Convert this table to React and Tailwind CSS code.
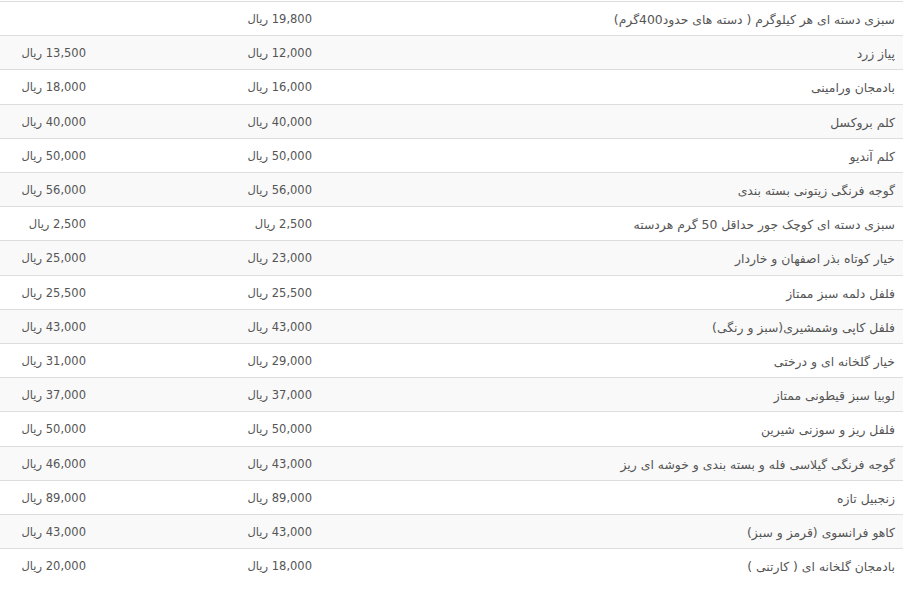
import React from "react";

const rows = [
  ["سبزی دسته ای هر کیلوگرم ( دسته های حدود400گرم)", "19,800", ""],
  ["پیاز زرد", "12,000", "13,500"],
  ["بادمجان ورامینی", "16,000", "18,000"],
  ["کلم بروکسل", "40,000", "40,000"],
  ["کلم آندیو", "50,000", "50,000"],
  ["گوجه فرنگی زیتونی بسته بندی", "56,000", "56,000"],
  ["سبزی دسته ای کوچک جور حداقل 50 گرم هردسته", "2,500", "2,500"],
  ["خیار کوتاه بذر اصفهان و خاردار", "23,000", "25,000"],
  ["فلفل دلمه سبز ممتاز", "25,500", "25,500"],
  ["فلفل کاپی وشمشیری(سبز و رنگی)", "43,000", "43,000"],
  ["خیار گلخانه ای و درختی", "29,000", "31,000"],
  ["لوبیا سبز قیطونی ممتاز", "37,000", "37,000"],
  ["فلفل ریز و سوزنی شیرین", "50,000", "50,000"],
  ["گوجه فرنگی گیلاسی فله و بسته بندی و خوشه ای ریز", "43,000", "46,000"],
  ["زنجبیل تازه", "89,000", "89,000"],
  ["کاهو فرانسوی (قرمز و سبز)", "43,000", "43,000"],
  ["بادمجان گلخانه ای ( کارتنی )", "18,000", "20,000"],
];

const price = (v) => (v ? `${v} ریال` : "");

export default function App() {
  return (
    <div className="w-[908px] h-[590px] bg-white overflow-hidden pt-[1px]">
      <table
        dir="rtl"
        className="w-[903px] border-collapse table-fixed text-[11.5px] text-[#555] font-['DejaVu_Sans',sans-serif]"
      >
        <colgroup>
          <col className="w-[583px]" />
          <col className="w-[226px]" />
          <col className="w-[94px]" />
        </colgroup>
        <tbody>
          {rows.map((r, i) => (
            <tr
              key={i}
              className={`border-t border-[#dddddd] ${i % 2 === 1 ? "bg-[#f9f9f9]" : "bg-white"}`}
            >
              <td className="px-2 pt-[9px] pb-[7px] leading-[17.2px] text-right whitespace-nowrap text-[12.4px]">{r[0]}</td>
              <td className="px-2 pt-[9px] pb-[7px] leading-[17.2px] text-right whitespace-nowrap">{price(r[1])}</td>
              <td className="px-2 pt-[9px] pb-[7px] leading-[17.2px] text-right whitespace-nowrap">{price(r[2])}</td>
            </tr>
          ))}
        </tbody>
      </table>
    </div>
  );
}
